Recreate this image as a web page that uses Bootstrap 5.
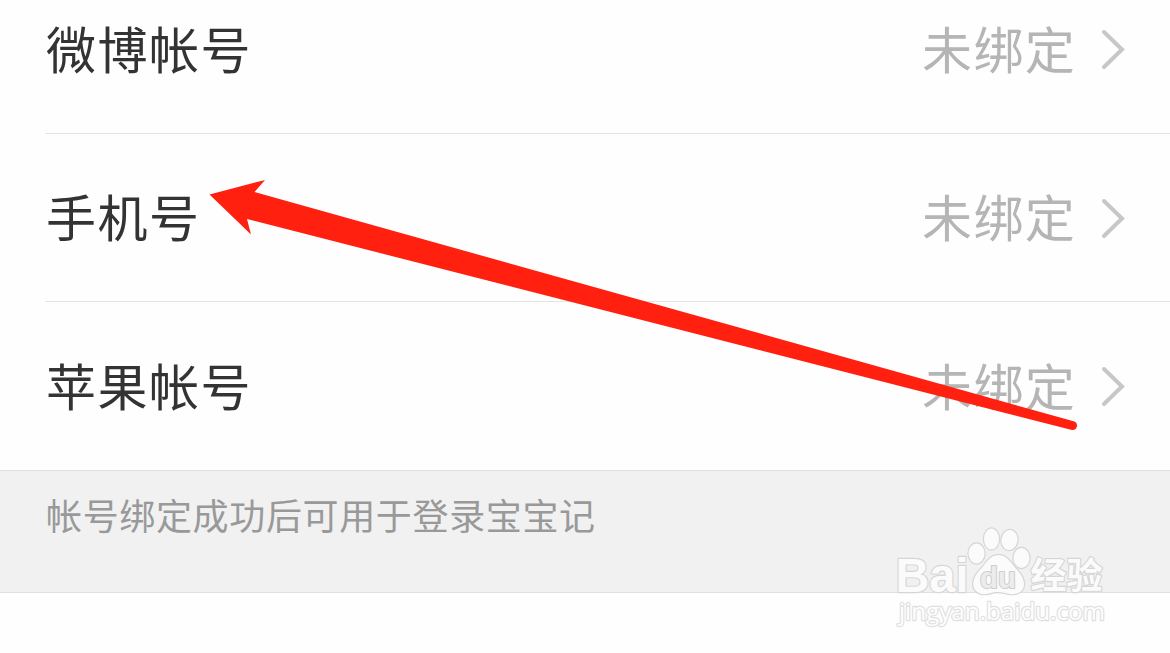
<!DOCTYPE html>
<html lang="zh-CN">
  <head>
    <title>帐号绑定</title>
    <meta charset="utf-8" />
    <meta name="viewport" content="width=device-width, initial-scale=1" />
    <link
      href="https://cdn.jsdelivr.net/npm/bootstrap@5.3.3/dist/css/bootstrap.min.css"
      rel="stylesheet"
    />
    <script src="https://cdn.jsdelivr.net/npm/bootstrap@5.3.3/dist/js/bootstrap.bundle.min.js"></script>
    <style>
      body {
        font-family: "Noto Sans CJK SC", sans-serif;
        background: #fefefe;
        height: 653px;
      }
      /* the list is scrolled a little under the top edge */
      .account-list {
        margin-top: -35px;
      }
      .account-list .list-group-item {
        height: 168px;
        margin-left: 45px;
        padding: 0 44px 0 1px;
        background: #fefefe;
        border-color: #e4e4e4;
        border-width: 0 0 1px;
        line-height: 72px;
      }
      .account-list .list-group-item:first-child {
        height: 169px;
      }
      .account-list .list-group-item:last-child {
        border-bottom: 0;
      }
      .account-name,
      .account-state {
        font-size: 50px;
        letter-spacing: 1.5px;
        color: #333;
        padding-bottom: 5px;
      }
      .account-state {
        color: #b5b5b5;
        letter-spacing: 1.3px;
        margin-right: 23px;
      }
      .hint {
        height: 123px;
        padding: 16px 46px;
        background: #f1f1f1;
        border: solid #e0e0e0;
        border-width: 1px 0;
        color: #999;
        font-size: 36px;
        line-height: 54px;
        letter-spacing: 0.65px;
      }
      .overlay {
        pointer-events: none;
      }
    </style>
  </head>
  <body class="position-relative overflow-hidden">
    <ul class="list-group list-group-flush account-list">
      <li class="list-group-item d-flex align-items-center">
        <span class="account-name me-auto">微博帐号</span>
        <span class="account-state">未绑定</span>
        <svg width="27" height="42" viewBox="0 0 27 42" fill="none" stroke="#c7c7c7" stroke-width="4" stroke-linecap="round">
          <path d="M5 4L23 21.500L5 39" />
        </svg>
      </li>
      <li class="list-group-item d-flex align-items-center">
        <span class="account-name me-auto">手机号</span>
        <span class="account-state">未绑定</span>
        <svg width="27" height="42" viewBox="0 0 27 42" fill="none" stroke="#c7c7c7" stroke-width="4" stroke-linecap="round">
          <path d="M5 4L23 21.500L5 39" />
        </svg>
      </li>
      <li class="list-group-item d-flex align-items-center">
        <span class="account-name me-auto">苹果帐号</span>
        <span class="account-state">未绑定</span>
        <svg width="27" height="42" viewBox="0 0 27 42" fill="none" stroke="#c7c7c7" stroke-width="4" stroke-linecap="round">
          <path d="M5 4L23 21.500L5 39" />
        </svg>
      </li>
    </ul>
    <div class="hint">帐号绑定成功后可用于登录宝宝记</div>

    <svg class="overlay position-absolute top-0 start-0" width="1170" height="653" viewBox="0 0 1170 653">
      <!-- watermark -->
      <g fill="#fbfbfb" stroke="#d6d6d6" stroke-width="2.400" paint-order="stroke" stroke-linejoin="round">
        <text x="895.500" y="592" font-family="Liberation Sans" font-weight="bold" font-size="48" textLength="73" lengthAdjust="spacingAndGlyphs">Bai</text>
        <ellipse cx="976.500" cy="553.500" rx="8" ry="10" />
        <ellipse cx="991.500" cy="539" rx="7.500" ry="10.500" />
        <ellipse cx="1009.500" cy="540" rx="8" ry="10" transform="rotate(8 1009.500 540)" />
        <ellipse cx="1021.500" cy="558" rx="8" ry="10" />
        <path d="M998.500 555C1008 555 1011 564 1018 571C1027 581 1026 593 1014 594C1008 595 1004 592 998 592C991 592 988 595 982 594C972 592 970 581 979 571C986 564 989 555 998.500 555Z" />
        <text x="980" y="587.500" font-family="Liberation Sans" font-size="29" font-weight="bold" textLength="36" lengthAdjust="spacingAndGlyphs" fill="#ececec" stroke="#cdcdcd" stroke-width="2">du</text>
        <text x="1030.500" y="589" font-family="Noto Sans CJK SC" font-weight="bold" font-size="36" textLength="72" lengthAdjust="spacingAndGlyphs">经验</text>
        <text x="899" y="620" font-family="Open Sans" font-size="24" textLength="206" lengthAdjust="spacingAndGlyphs" fill="#fefefe" stroke="#e0e0e0" stroke-width="2.400">jingyan.baidu.com</text>
      </g>
      <!-- arrow -->
      <path d="M209.500 194.500L265 180L254.500 192L1074.500 421.500A4.500 4.500 0 0 1 1072 430L247 219L251 234.500Z" fill="#ff2010" />
    </svg>
  </body>
</html>
